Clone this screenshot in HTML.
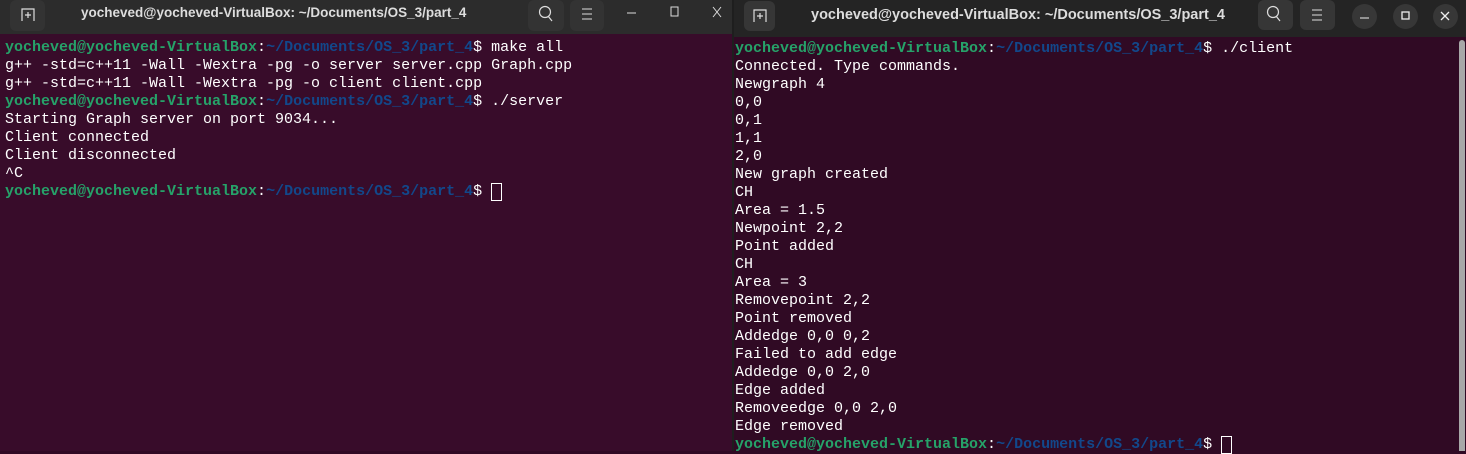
<!DOCTYPE html>
<html><head><meta charset="utf-8"><style>
*{margin:0;padding:0;box-sizing:border-box}
body{width:1466px;height:451px;overflow:hidden;background:#300a24;position:relative;font-family:"Liberation Mono",monospace}
.win{position:absolute;top:0;height:451px}
.tb{position:absolute;left:0;right:0;top:0;font-family:"Liberation Sans",sans-serif;color:#ddd;font-weight:bold}
.title{position:absolute;white-space:nowrap}
.btn{position:absolute;border-radius:6px;background:#363636}
.circ{position:absolute;top:4px;width:25px;height:25px;border-radius:50%;background:#373737}
.term{position:absolute;font-size:15px;line-height:18px;color:#fff;white-space:pre}
.g{color:#26a269;font-weight:bold}.b{color:#12488b;font-weight:bold}
.cur{display:inline-block;width:11px;height:18px;border:1px solid #fff;vertical-align:top}
</style></head><body>
<div class="win" style="left:0;width:733px;background:#380c2a">
 <div class="tb" style="height:34px;background:#2c2c2c">
  <div class="btn" style="left:10px;top:0;width:35px;height:31px;background:#333"></div>
  <svg style="position:absolute;left:21px;top:8px" width="14" height="14"><path d="M1 13V1h12v12" fill="none" stroke="#ddd" stroke-width="1.2"/><path d="M7 4v6M4 7h6" stroke="#ddd" stroke-width="1.2"/></svg>
  <div class="title" style="left:81px;top:4px;font-size:13.5px;line-height:18px">yocheved@yocheved-VirtualBox: ~/Documents/OS_3/part_4</div>
  <div class="btn" style="left:528px;top:0;width:36px;height:31px;background:#333"></div>
  <div class="btn" style="left:570px;top:0;width:34px;height:31px;background:#333"></div>
  <svg style="position:absolute;left:538px;top:5px" width="16" height="18"><circle cx="7" cy="7" r="5.5" fill="none" stroke="#ddd" stroke-width="1.2"/><path d="M10 11l4 5" stroke="#ddd" stroke-width="1.2"/></svg>
  <svg style="position:absolute;left:581px;top:7px" width="12" height="14"><path d="M1 2h10M1 7h10M1 12h10" stroke="#ddd" stroke-width="1"/></svg>
  <svg style="position:absolute;left:627px;top:12px" width="10" height="2"><path d="M0 1h9" stroke="#ddd"/></svg>
  <svg style="position:absolute;left:670px;top:6px" width="10" height="12"><rect x="1" y="1" width="7" height="9" fill="none" stroke="#ddd"/></svg>
  <svg style="position:absolute;left:712px;top:6px" width="10" height="12"><path d="M1 1l8 10M9 1l-8 10" stroke="#ddd"/></svg>
 </div>
 <div class="term" style="left:5px;top:39px"><span class="g">yocheved@yocheved-VirtualBox</span>:<span class="b">~/Documents/OS_3/part_4</span>$ make all
g++ -std=c++11 -Wall -Wextra -pg -o server server.cpp Graph.cpp
g++ -std=c++11 -Wall -Wextra -pg -o client client.cpp
<span class="g">yocheved@yocheved-VirtualBox</span>:<span class="b">~/Documents/OS_3/part_4</span>$ ./server
Starting Graph server on port 9034...
Client connected
Client disconnected
^C
<span class="g">yocheved@yocheved-VirtualBox</span>:<span class="b">~/Documents/OS_3/part_4</span>$ <span class="cur"></span></div>
</div>
<div style="position:absolute;left:732px;top:0;width:2px;height:451px;background:#1e1e1e"></div>
<div class="win" style="left:734px;width:732px;background:#300a24">
 <div class="tb" style="height:37px;background:#242424">
  <div class="btn" style="left:10px;top:1px;width:31px;height:30px"></div>
  <svg style="position:absolute;left:19px;top:9px" width="14" height="14"><path d="M1 13V1h12v12" fill="none" stroke="#ddd" stroke-width="1.2"/><path d="M7 4v6M4 7h6" stroke="#ddd" stroke-width="1.2"/></svg>
  <div class="title" style="left:77px;top:6px;font-size:14.5px;line-height:18px">yocheved@yocheved-VirtualBox: ~/Documents/OS_3/part_4</div>
  <div class="btn" style="left:524px;top:0;width:35px;height:30px"></div>
  <div class="btn" style="left:566px;top:0;width:35px;height:30px"></div>
  <svg style="position:absolute;left:532px;top:5px" width="16" height="18"><circle cx="7" cy="7" r="5.5" fill="none" stroke="#ddd" stroke-width="1.2"/><path d="M10 11l4 5" stroke="#ddd" stroke-width="1.2"/></svg>
  <svg style="position:absolute;left:577px;top:8px" width="12" height="14"><path d="M1 2h10M1 7h10M1 12h10" stroke="#ddd" stroke-width="1"/></svg>
  <div class="circ" style="left:618px"></div>
  <div class="circ" style="left:659px"></div>
  <div class="circ" style="left:699px"></div>
  <svg style="position:absolute;left:626px;top:17px" width="10" height="2"><path d="M0 1h9" stroke="#eee"/></svg>
  <svg style="position:absolute;left:667px;top:11px" width="10" height="10"><rect x="1" y="1" width="7" height="7" fill="none" stroke="#eee" stroke-width="1.3"/></svg>
  <svg style="position:absolute;left:706px;top:11px" width="10" height="10"><path d="M1 1l8 8M9 1l-8 8" stroke="#eee" stroke-width="1.3"/></svg>
 </div>
 <div class="term" style="left:1px;top:40px"><span class="g">yocheved@yocheved-VirtualBox</span>:<span class="b">~/Documents/OS_3/part_4</span>$ ./client
Connected. Type commands.
Newgraph 4
0,0
0,1
1,1
2,0
New graph created
CH
Area = 1.5
Newpoint 2,2
Point added
CH
Area = 3
Removepoint 2,2
Point removed
Addedge 0,0 0,2
Failed to add edge
Addedge 0,0 2,0
Edge added
Removeedge 0,0 2,0
Edge removed
<span class="g">yocheved@yocheved-VirtualBox</span>:<span class="b">~/Documents/OS_3/part_4</span>$ <span class="cur"></span></div>
 <div style="position:absolute;left:725px;top:40px;width:6px;height:411px;background:#a8a8a8;border-radius:3px 3px 0 0"></div>
</div>
</body></html>
